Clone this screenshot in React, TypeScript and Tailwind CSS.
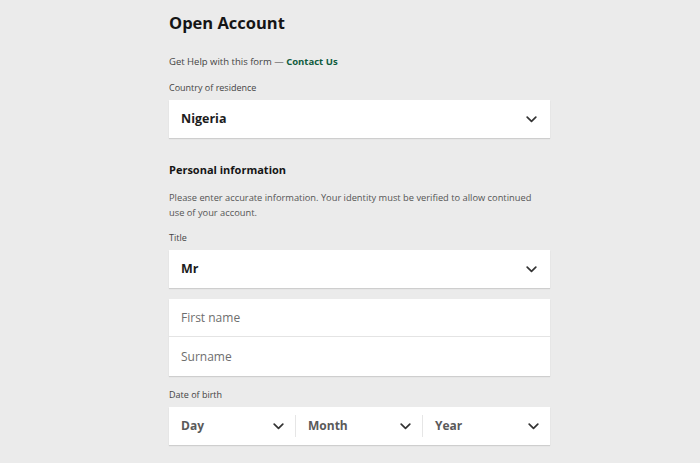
import React from "react";

const Chevron = ({ className = "" }: { className?: string }) => (
  <svg width="11" height="7" viewBox="0 0 11 7" className={className} fill="none">
    <polyline points="1.2,1.2 5.5,5.3 9.8,1.2" stroke="#333" strokeWidth="1.7" strokeLinecap="round" strokeLinejoin="round" />
  </svg>
);

const Select = ({ value }: { value: string }) => (
  <div className="flex h-[38px] items-center justify-between bg-white px-[12px] shadow-[0_1px_1px_rgba(0,0,0,0.12)]">
    <span className="text-[12.5px] font-bold text-[#1c1c1c]">{value}</span>
    <Chevron className="mr-[1px]" />
  </div>
);

const DobPart = ({ label, last }: { label: string; last?: boolean }) => (
  <div className="flex flex-1 items-center">
    <div className="flex flex-1 items-center justify-between pl-[12px] pr-[11px]">
      <span className="text-[12px] font-bold text-[#5a5a5a]">{label}</span>
      <Chevron />
    </div>
    {!last && <div className="h-[22px] w-px bg-[#e6e6e6]" />}
  </div>
);

export default function App() {
  return (
    <div className="min-h-[463px] w-full bg-[#ebebeb]" style={{ fontFamily: '"Open Sans", "Noto Sans", sans-serif' }}>
      <div className="ml-[169px] w-[381px] pt-[11px]">
        <h1 className="text-[16.5px] font-bold leading-[24px] text-[#151515]">Open Account</h1>
        <p className="mt-[20px] text-[9.5px] leading-[14px] text-[#444]">
          Get Help with this form — <span className="font-bold text-[#0f5c3e]">Contact Us</span>
        </p>
        <p className="mt-[12px] text-[9px] leading-[14px] text-[#444]">Country of residence</p>
        <div className="mt-[5px]">
          <Select value="Nigeria" />
        </div>
        <h2 className="mt-[24px] text-[11px] font-bold leading-[16px] text-[#151515]">Personal information</h2>
        <p className="mt-[12px] max-w-[368px] text-[9.3px] leading-[15px] text-[#555]">
          Please enter accurate information. Your identity must be verified to allow continued use of your account.
        </p>
        <p className="mt-[11px] text-[9px] leading-[14px] text-[#444]">Title</p>
        <div className="mt-[5px]">
          <Select value="Mr" />
        </div>
        <div className="mt-[11px] bg-white shadow-[0_1px_1px_rgba(0,0,0,0.12)]">
          <div className="flex h-[38px] items-center border-b border-[#e4e4e4] px-[12px] text-[12px] text-[#6e6e6e]">First name</div>
          <div className="flex h-[39px] items-center px-[12px] text-[12px] text-[#6e6e6e]">Surname</div>
        </div>
        <p className="mt-[12px] text-[9px] leading-[14px] text-[#444]">Date of birth</p>
        <div className="mt-[5px] flex h-[38px] items-center bg-white shadow-[0_1px_1px_rgba(0,0,0,0.12)]">
          <DobPart label="Day" />
          <DobPart label="Month" />
          <DobPart label="Year" last />
        </div>
      </div>
    </div>
  );
}
